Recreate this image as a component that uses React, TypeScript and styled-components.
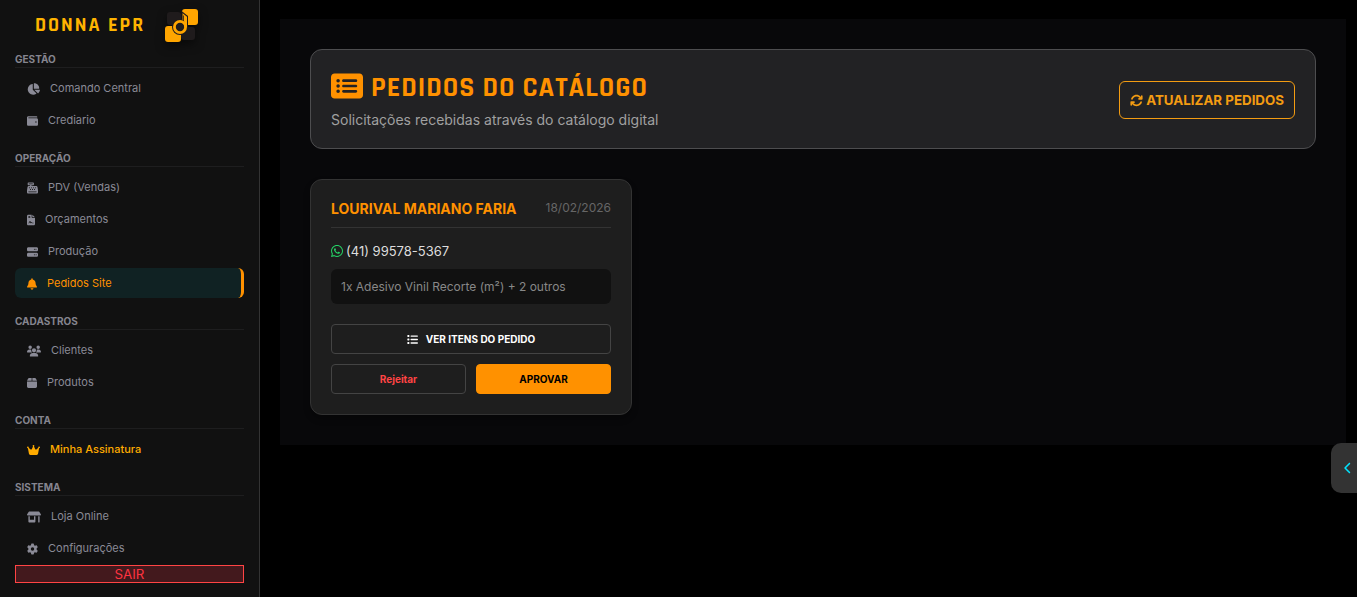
import React from "react";
import styled, { createGlobalStyle, css } from "styled-components";
import type { IconType } from "react-icons";
import {
  FaArrowsRotate,
  FaBell,
  FaBox,
  FaCashRegister,
  FaChartPie,
  FaChevronLeft,
  FaCrown,
  FaFileContract,
  FaGear,
  FaList,
  FaRectangleList,
  FaServer,
  FaShop,
  FaUsers,
  FaWallet,
  FaWhatsapp,
} from "react-icons/fa6";

const GlobalStyle = createGlobalStyle`
  *, *::before, *::after { box-sizing: border-box; }
  body {
    margin: 0;
    background: #000;
    color: #fff;
    font-family: Inter, "Liberation Sans", sans-serif;
  }
  button { font-family: inherit; cursor: pointer; }
  h1, h2, h3, p, ul { margin: 0; padding: 0; }
`;

const displayFont = css`
  font-family: Rajdhani, "Liberation Sans Narrow", "Roboto Condensed", Roboto, sans-serif;
  font-weight: 700;
  text-transform: uppercase;
`;

const Shell = styled.div`
  display: flex;
  align-items: flex-start;
  min-height: 100vh;
`;

const Sidebar = styled.aside`
  flex: 0 0 260px;
  min-height: 100vh;
  padding: 0 15px 14px;
  background: #111;
  border-right: 1px solid #333;
`;

const Brand = styled.div`
  display: flex;
  align-items: center;
  gap: 16px;
  height: 53px;
  padding: 0 0 3px 20px;
`;

const BrandName = styled.span`
  ${displayFont}
  letter-spacing: 2px;
  font-size: 20px;
  line-height: 24px;
  color: #ffb400;
`;

const BrandLogo = styled.svg`
  width: 40px;
  height: 40px;
  filter: drop-shadow(0 4px 5px rgba(0, 0, 0, 0.5));
`;

const NavSection = styled.section`
  & + & { margin-top: 17px; }
`;

const NavTitle = styled.h3`
  margin-bottom: 5px;
  padding-bottom: 2px;
  border-bottom: 1px solid #1e1e1f;
  font-size: 10px;
  line-height: 12px;
  font-weight: 700;
  color: #85858f;
  text-transform: uppercase;
`;

const NavList = styled.ul`
  list-style: none;
`;

type Tone = "plain" | "active" | "gold";

const tones = {
  plain: css`color: #8a8a96;`,
  active: css`
    color: #ff9100;
    background: #102223;
    border-right-color: #ff9100;
  `,
  gold: css`
    color: #ffab00;
    font-weight: 500;
  `,
};

const NavLink = styled.a<{ $tone: Tone; $iconWidth: number }>`
  display: flex;
  align-items: center;
  gap: 10px;
  height: 30px;
  margin-bottom: 2px;
  padding: 0 12px;
  border-right: 3px solid transparent;
  border-radius: 6px;
  font-size: 11px;
  text-decoration: none;
  ${(p) => tones[p.$tone]}

  svg {
    flex: none;
    width: ${(p) => p.$iconWidth}px;
    height: 12px;
    margin-top: 2px;
  }
`;

const LogoutButton = styled.button`
  display: block;
  width: 100%;
  height: 18px;
  padding: 0;
  border: 1px solid #ff4444;
  background: #43191d;
  color: #ff3340;
  line-height: 16px;
`;

const Main = styled.main`
  flex: 1;
  min-width: 0;
  padding: 19px 11px 20px 20px;
`;

const Panel = styled.div`
  padding: 30px;
  background: #08080a;
`;

const PageHeader = styled.header`
  display: flex;
  align-items: center;
  justify-content: space-between;
  gap: 20px;
  margin-bottom: 30px;
  padding: 20px 20px 18px;
  background: #222224;
  border: 1px solid #4d4d4f;
  border-radius: 12px;
`;

const PageTitle = styled.h1`
  ${displayFont}
  display: flex;
  align-items: flex-start;
  gap: 8px;
  letter-spacing: 1px;
  font-size: 28px;
  line-height: 36px;
  color: #ff9100;

  svg {
    width: 32px;
    height: 32px;
  }
`;

const PageSubtitle = styled.p`
  margin-top: 4px;
  font-size: 14px;
  line-height: 20px;
  color: #a0a0a0;
`;

const RefreshButton = styled.button`
  display: flex;
  align-items: center;
  gap: 3px;
  height: 38px;
  padding: 0 10px;
  border: 1px solid #f39c12;
  border-radius: 6px;
  background: transparent;
  color: #f39c12;
  font-weight: 700;
  text-transform: uppercase;
  white-space: nowrap;

  svg { width: 13px; height: 13px; }
`;

const OrderGrid = styled.div`
  display: grid;
  grid-template-columns: repeat(auto-fill, minmax(300px, 1fr));
  gap: 20px;
`;

const OrderCard = styled.article`
  padding: 20px;
  background: #1e1e1e;
  border: 1px solid #333;
  border-radius: 12px;
  box-shadow: 0 4px 6px rgba(0, 0, 0, 0.3);
`;

const OrderHead = styled.div`
  display: flex;
  justify-content: space-between;
  margin-bottom: 15px;
  padding-bottom: 9px;
  border-bottom: 1px solid #333;
`;

const CustomerName = styled.h2`
  font-size: 14px;
  line-height: 18px;
  font-weight: 700;
  color: #ff9100;
  text-transform: uppercase;
`;

const OrderDate = styled.time`
  font-size: 12px;
  line-height: 16px;
  color: #666;
`;

const Phone = styled.p`
  display: flex;
  align-items: center;
  gap: 3px;
  font-size: 13px;
  line-height: 16px;
  color: #ddd;

  svg {
    width: 12px;
    height: 14px;
    color: #25d366;
  }
`;

const OrderSummary = styled.p`
  margin: 10px 0 20px;
  padding: 10px;
  border-radius: 6px;
  background: #111;
  color: #888;
  font-size: 12px;
  line-height: 15px;
`;

const OrderActions = styled.div`
  display: grid;
  grid-template-columns: 1fr 1fr;
  gap: 10px;
`;

const ActionButton = styled.button<{ $kind: "view" | "reject" | "approve" }>`
  display: flex;
  align-items: center;
  justify-content: center;
  gap: 8px;
  height: 30px;
  padding: 0 10px;
  border: 1px solid #444;
  border-radius: 4px;
  background: transparent;
  font-size: 10px;
  font-weight: 700;

  ${(p) => p.$kind === "view" && css`grid-column: 1 / -1; color: #fff;`}
  ${(p) => p.$kind === "reject" && css`color: #ff4444;`}
  ${(p) => p.$kind === "approve" && css`color: #000; background: #ff9100; border-color: #ff9100;`}

  svg { width: 11px; height: 11px; }
`;

const DrawerTab = styled.button`
  position: fixed;
  right: 0;
  bottom: 104px;
  display: flex;
  align-items: center;
  justify-content: flex-end;
  width: 26px;
  height: 50px;
  padding: 0 5px 0 0;
  border: 0;
  border-radius: 10px 0 0 10px;
  background: #333;
  color: #00e5ff;

  svg { width: 8px; height: 12px; }
`;

interface NavItem {
  label: string;
  icon: IconType;
  iconWidth: number;
  tone?: Tone;
}

const navigation: { title: string; items: NavItem[] }[] = [
  {
    title: "Gestão",
    items: [
      { label: "Comando Central", icon: FaChartPie, iconWidth: 13 },
      { label: "Crediario", icon: FaWallet, iconWidth: 11 },
    ],
  },
  {
    title: "Operação",
    items: [
      { label: "PDV (Vendas)", icon: FaCashRegister, iconWidth: 11 },
      { label: "Orçamentos", icon: FaFileContract, iconWidth: 8 },
      { label: "Produção", icon: FaServer, iconWidth: 11 },
      { label: "Pedidos Site", icon: FaBell, iconWidth: 10, tone: "active" },
    ],
  },
  {
    title: "Cadastros",
    items: [
      { label: "Clientes", icon: FaUsers, iconWidth: 14 },
      { label: "Produtos", icon: FaBox, iconWidth: 10 },
    ],
  },
  {
    title: "Conta",
    items: [{ label: "Minha Assinatura", icon: FaCrown, iconWidth: 13, tone: "gold" }],
  },
  {
    title: "Sistema",
    items: [
      { label: "Loja Online", icon: FaShop, iconWidth: 14 },
      { label: "Configurações", icon: FaGear, iconWidth: 11 },
    ],
  },
];

function Logo() {
  return (
    <BrandLogo viewBox="0 0 40 40" aria-hidden="true">
      <rect x="6" y="7" width="14" height="13" rx="3" fill="#1f1b1c" />
      <rect x="20" y="22" width="14" height="13" rx="3" fill="#1f1b1c" />
      <rect x="21" y="4" width="16" height="16" rx="3" fill="#ffa500" />
      <rect x="4" y="21" width="16" height="16" rx="3" fill="#ffa500" />
      <path d="M20.600 6l6.400 5v11h-6.400z" fill="#1f1b1c" />
      <circle cx="19" cy="22" r="8" fill="#1f1b1c" />
      <circle cx="19" cy="22" r="5.600" fill="none" stroke="#ffa500" strokeWidth="2.800" />
      <path d="M21.600 8.200l4.400 3.600V22h-2.800v-5.500l-1.600-1.500z" fill="#ffa500" />
      <path d="M22.500 10.500v5.500" stroke="#1f1b1c" strokeWidth="0.800" />
    </BrandLogo>
  );
}

export default function App() {
  return (
    <>
      <GlobalStyle />
      <Shell>
        <Sidebar>
          <Brand>
            <BrandName>Donna EPR</BrandName>
            <Logo />
          </Brand>
          <nav>
            {navigation.map((section) => (
              <NavSection key={section.title}>
                <NavTitle>{section.title}</NavTitle>
                <NavList>
                  {section.items.map(({ label, icon: Icon, iconWidth, tone = "plain" }) => (
                    <li key={label}>
                      <NavLink
                        href="#"
                        $tone={tone}
                        $iconWidth={iconWidth}
                        aria-current={tone === "active" ? "page" : undefined}
                      >
                        <Icon />
                        {label}
                      </NavLink>
                    </li>
                  ))}
                </NavList>
              </NavSection>
            ))}
          </nav>
          <LogoutButton type="button">SAIR</LogoutButton>
        </Sidebar>

        <Main>
          <Panel>
            <PageHeader>
              <div>
                <PageTitle>
                  <FaRectangleList />
                  Pedidos do Catálogo
                </PageTitle>
                <PageSubtitle>Solicitações recebidas através do catálogo digital</PageSubtitle>
              </div>
              <RefreshButton type="button">
                <FaArrowsRotate />
                Atualizar pedidos
              </RefreshButton>
            </PageHeader>

            <OrderGrid>
              <OrderCard>
                <OrderHead>
                  <CustomerName>Lourival Mariano Faria</CustomerName>
                  <OrderDate dateTime="2026-02-18">18/02/2026</OrderDate>
                </OrderHead>
                <Phone>
                  <FaWhatsapp />
                  (41) 99578-5367
                </Phone>
                <OrderSummary>1x Adesivo Vinil Recorte (m²) + 2 outros</OrderSummary>
                <OrderActions>
                  <ActionButton type="button" $kind="view">
                    <FaList />
                    VER ITENS DO PEDIDO
                  </ActionButton>
                  <ActionButton type="button" $kind="reject">Rejeitar</ActionButton>
                  <ActionButton type="button" $kind="approve">APROVAR</ActionButton>
                </OrderActions>
              </OrderCard>
            </OrderGrid>
          </Panel>
        </Main>
      </Shell>
      <DrawerTab type="button" aria-label="Abrir painel">
        <FaChevronLeft />
      </DrawerTab>
    </>
  );
}
